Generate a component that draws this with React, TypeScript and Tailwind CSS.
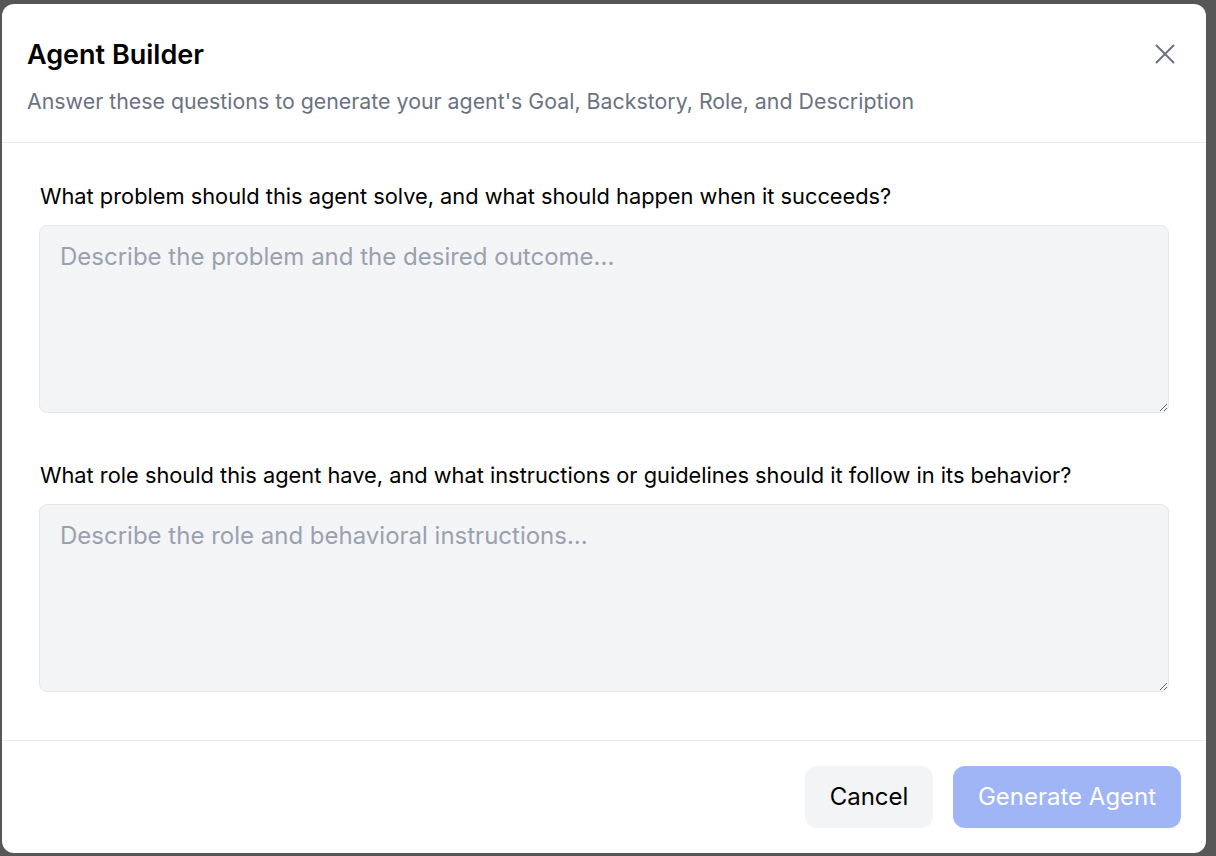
import { X } from "lucide-react";

const QUESTIONS = [
  {
    label: "What problem should this agent solve, and what should happen when it succeeds?",
    placeholder: "Describe the problem and the desired outcome...",
  },
  {
    label:
      "What role should this agent have, and what instructions or guidelines should it follow in its behavior?",
    placeholder: "Describe the role and behavioral instructions...",
  },
];

export default function App() {
  return (
    <div
      className="h-[856px] w-[1216px] overflow-hidden bg-[#575757] pl-[2px] pt-[4px]"
      style={{ fontFamily: "Inter, 'Noto Sans', sans-serif" }}
    >
      <div className="flex h-[849px] w-[1204px] flex-col rounded-xl bg-white">
        {/* header */}
        <header className="relative border-b border-gray-200 px-[25px] pb-[27px] pt-[33px]">
          <h1 className="text-[27px] font-semibold leading-9 text-black">Agent Builder</h1>
          <p className="mt-[14px] text-[21.35px] leading-7 text-gray-500">
            Answer these questions to generate your agent's Goal, Backstory, Role, and Description
          </p>
          <button className="absolute right-[24px] top-[33px] text-gray-500">
            <X className="h-[34px] w-[34px]" strokeWidth={1.4} />
          </button>
        </header>

        {/* body */}
        <div className="flex flex-1 flex-col gap-[48px] px-[37px] pt-[39px]">
          {QUESTIONS.map((q) => (
            <div key={q.label} className="flex flex-col gap-[15px]">
              <label className="pl-[1px] text-[21.8px] leading-7 text-black">{q.label}</label>
              <textarea
                placeholder={q.placeholder}
                className="h-[188px] w-full resize-y rounded-lg border border-gray-200 bg-gray-100 px-5 py-[15px] text-[24px] leading-8 placeholder:text-gray-400 focus:outline-none"
              />
            </div>
          ))}
        </div>

        {/* footer */}
        <footer className="flex justify-end gap-5 border-t border-gray-200 p-[25px]">
          <button className="h-[62px] w-[128px] rounded-xl bg-gray-100 text-[24px] text-black">
            Cancel
          </button>
          <button
            disabled
            className="h-[62px] w-[228px] rounded-xl bg-[#a0b5f5] text-[24px] text-white"
          >
            Generate Agent
          </button>
        </footer>
      </div>
    </div>
  );
}
